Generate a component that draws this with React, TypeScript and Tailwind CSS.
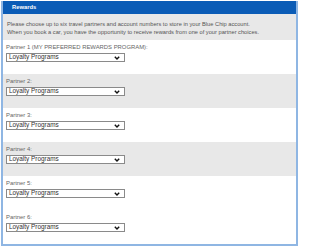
import React from "react";

const partners = [
  { label: "Partner 1 (MY PREFERRED REWARDS PROGRAM):", bg: "bg-white" },
  { label: "Partner 2:", bg: "bg-[#e8e8e8]" },
  { label: "Partner 3:", bg: "bg-white" },
  { label: "Partner 4:", bg: "bg-[#e8e8e8]" },
  { label: "Partner 5:", bg: "bg-white" },
  { label: "Partner 6:", bg: "bg-white" },
];

function FakeSelect() {
  return (
    <div className="mt-[2px] flex h-[9px] w-[119px] items-center justify-between border border-[#8a8a8a] bg-white pl-[2px] pr-[4px] text-[6.4px] leading-none text-[#333]">
      <span>Loyalty Programs</span>
      <svg width="6" height="4" viewBox="0 0 6 4">
        <polyline points="0.8,0.8 3,3 5.2,0.8" fill="none" stroke="#111" strokeWidth="1.4" />
      </svg>
    </div>
  );
}

export default function App() {
  return (
    <div className="h-[249px] w-[300px] bg-white pt-[1px] pl-[1px] font-['Liberation_Sans',Arial,sans-serif]">
      <div className="w-[297px] border-2 border-t-0 border-[#8fb6e3]">
        <div className="flex h-[13px] items-center bg-[#0b5cb6] pl-[9px] text-[5.8px] font-bold text-white">Rewards</div>
        <div className="h-[26px] bg-[#e8e8e8] px-[4px] pt-[6px] text-[5.7px] leading-[8px] text-[#555]">
          <p>Please choose up to six travel partners and account numbers to store in your Blue Chip account.</p>
          <p>When you book a car, you have the opportunity to receive rewards from one of your partner choices.</p>
        </div>
        {partners.map((p) => (
          <div key={p.label} className={`h-[34px] ${p.bg} px-[3px] pt-[3px]`}>
            <div className="text-[5.9px] leading-[8px] text-[#666]">{p.label}</div>
            <FakeSelect />
          </div>
        ))}
      </div>
    </div>
  );
}
